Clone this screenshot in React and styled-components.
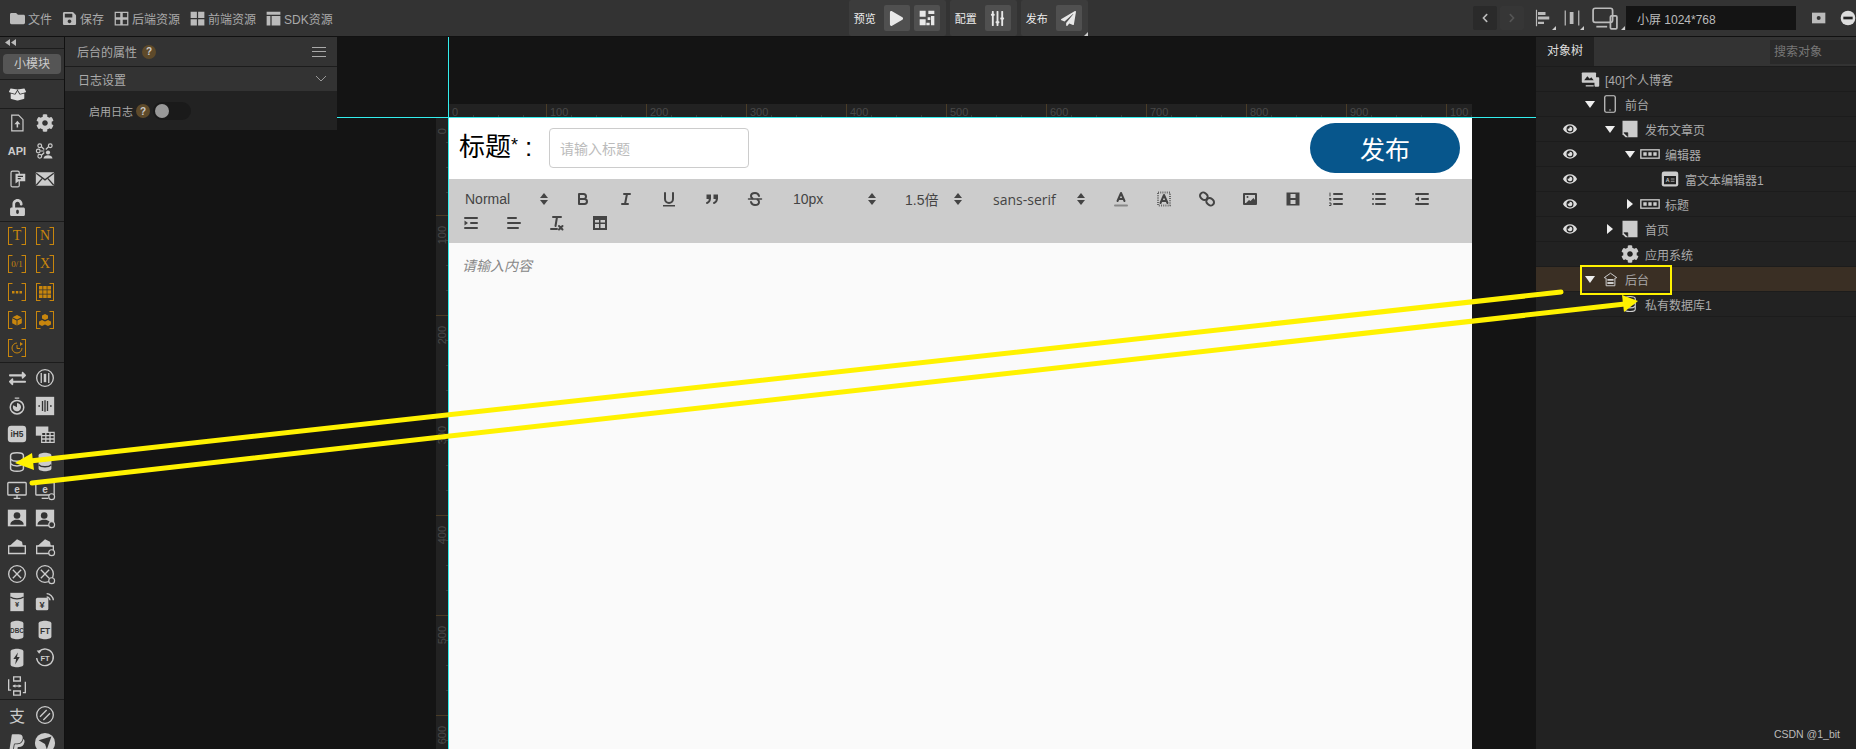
import React from 'react';
import styled, { createGlobalStyle } from 'styled-components';
import { FaBoxOpen, FaCog, FaUnlockAlt, FaPaypal, FaEye, FaPlay, FaPaperPlane, FaExchangeAlt, FaChevronLeft, FaChevronRight, FaFolder, FaSave, FaSlidersH } from 'react-icons/fa';

const GlobalStyle = createGlobalStyle`
  html, body { margin: 0; padding: 0; background: #141414; }
  body { font-family: "Liberation Sans", "Noto Sans CJK SC", sans-serif; font-size: 12px; overflow: hidden; }
  * { box-sizing: border-box; }
`;

const Shell = styled.div`
  position: relative;
  width: 1856px;
  height: 749px;
  overflow: hidden;
  display: flex;
  flex-direction: column;
  background: #141414;
`;

/* ---------- top bar ---------- */
const TopBar = styled.div`
  height: 37px;
  flex: none;
  display: flex;
  background: #333;
  border-bottom: 1px solid #111;
  color: #aaa;
`;
const FileMenu = styled.div`
  width: 850px;
  display: flex;
  align-items: center;
  gap: 10px;
  padding-left: 10px;
`;
const MenuItem = styled.div`
  display: flex;
  align-items: center;
  gap: 3px;
  svg { color: #bbb; width: 15px; height: 15px; }
`;
const ActionGroups = styled.div`
  width: 625px;
  display: flex;
  gap: 4px;
`;
const ActionGroup = styled.div`
  position: relative;
  display: flex;
  align-items: center;
  height: 36px;
  gap: 4px;
  padding: 0 6px 0 5px;
  background: #3c3c3c;
  color: #eee;
  font-size: 11px;
  border-radius: 2px;
  span { margin-right: 4px; }
`;
const SquareBtn = styled.div`
  width: 26px;
  height: 26px;
  display: flex;
  align-items: center;
  justify-content: center;
  background: #505050;
  border-radius: 2px;
  color: #e8e8e8;
`;
const CornerMark = styled.i`
  position: absolute;
  right: ${p => p.$r || 0}px;
  bottom: ${p => p.$b || 0}px;
  width: 0;
  height: 0;
  border-left: 4px solid transparent;
  border-bottom: 4px solid #ccc;
`;
const RightTools = styled.div`
  flex: 1;
  display: flex;
  align-items: center;
`;
const NavBtn = styled.div`
  width: 24px;
  height: 24px;
  margin-right: 3px;
  display: flex;
  align-items: center;
  justify-content: center;
  border-radius: 2px;
  background: ${p => (p.$off ? '#363636' : '#2a2a2a')};
  color: ${p => (p.$off ? '#555' : '#bbb')};
`;
const ToolIcon = styled.div`
  position: relative;
  width: ${p => p.$w}px;
  height: 24px;
  display: flex;
  align-items: center;
  justify-content: center;
  color: #bbb;
`;
const ScreenSelect = styled.div`
  width: 170px;
  height: 24px;
  margin-left: 1px;
  padding-left: 11px;
  display: flex;
  align-items: center;
  background: #141414;
  color: #bbb;
`;

/* ---------- body ---------- */
const Body = styled.div`
  flex: 1;
  display: flex;
  min-height: 0;
`;

const LeftStrip = styled.div`
  width: 65px;
  flex: none;
  background: #333;
  border-right: 1px solid #111;
  overflow: hidden;
`;
const Collapse = styled.div`
  height: 12px;
  padding: 2px 0 0 5px;
  color: #bbb;
  border-bottom: 1px solid #1c1c1c;
`;
const PillRow = styled.div`
  height: 31px;
  padding: 5px 3px 0;
  border-bottom: 1px solid #1c1c1c;
`;
const Pill = styled.div`
  height: 20px;
  line-height: 20px;
  text-align: center;
  background: #555;
  border-radius: 4px;
  color: #ccc;
`;
const BoxRow = styled.div`
  height: 29px;
  padding-left: 9px;
  display: flex;
  align-items: center;
  color: #ddd;
  border-bottom: 1px solid #1c1c1c;
`;
const IconGrid = styled.div`
  display: grid;
  grid-template-columns: 28px 28px;
  grid-auto-rows: 28px;
  padding: ${p => p.$pad || 0}px 0 0 3px;
  height: ${p => p.$h}px;
  border-bottom: ${p => (p.$last ? 'none' : '1px solid #1c1c1c')};
`;
const Cell = styled.div`
  display: flex;
  align-items: center;
  justify-content: center;
  color: #ccc;
`;
const ApiText = styled.span`
  font-weight: 700;
  font-size: 11px;
  color: #ccc;
`;
const PayChar = styled.span`
  font-size: 16px;
`;
const Bracket = styled.div`
  width: 18px;
  height: 18px;
  display: flex;
  align-items: center;
  justify-content: center;
  border: 1.5px solid #c8860d;
  color: #c8860d;
  font-family: "Liberation Serif", serif;
  font-size: ${p => p.$fs || 14}px;
  clip-path: polygon(0 0, 25% 0, 25% 2px, 75% 2px, 75% 0, 100% 0, 100% 100%, 75% 100%, 75% calc(100% - 2px), 25% calc(100% - 2px), 25% 100%, 0 100%);
`;

const Ico = styled.svg.attrs(p => ({ viewBox: '0 0 24 24', width: p.$s || 18, height: p.$s || 18 }))`
  fill: currentColor;
  display: block;
  overflow: visible;
`;
const line = { fill: 'none', stroke: 'currentColor', strokeWidth: 1.6 };
const dark = { fill: 'none', stroke: '#333', strokeWidth: 1.6 };
const Plus = () => <circle cx="20" cy="20" r="3.5" fill="#333" stroke="currentColor" strokeWidth="1.4" />;
const Txt = ({ x = 12, y = 16, s = 8, c = '#333', children }) => (
  <text x={x} y={y} fontSize={s} fontWeight="700" textAnchor="middle" fill={c} fontFamily="Liberation Sans">{children}</text>
);
const Cyl = ({ children, outline }) => (
  <Ico $s={22}>
    <path d="M5 5c0-4 14-4 14 0v14c0 4-14 4-14 0z" {...(outline ? line : {})} />
    {children}
  </Ico>
);

const toolIcons = [
  <Ico><path d="M5 1.5h9l6 6v15H5z" {...line} /><path d="M12.5 9l4 4.5h-3V18h-2v-4.500H8.500z" /></Ico>,
  <FaCog size={18} />,
  <ApiText>API</ApiText>,
  <Ico><g {...line}><circle cx="5" cy="5" r="2.500" /><circle cx="19" cy="5" r="2.500" /><circle cx="5" cy="19" r="2.500" /><circle cx="3" cy="12" r="2.500" /><path d="M7 6l4 4M17 6l-4 4M6 12h5M7 18l4-4" /></g><circle cx="16" cy="14" r="2.800" /><path d="M10 22c0-6 12-6 12 0z" /></Ico>,
  <Ico><rect x="4" y="1.500" width="11" height="21" rx="2" {...line} /><path d="M10 5h13v10H14l-4 3z" /><path d="M13 8.500h7M13 11.500h4" {...dark} /></Ico>,
  <Ico $s={20}><rect x="1" y="4" width="22" height="16" rx="1" /><path d="M1.500 5l10.500 8 10.500-8M1.500 19.500l7-8M22.500 19.500l-7-8" {...dark} /></Ico>,
  <FaUnlockAlt size={17} />,
];

const Orange = styled.svg.attrs({ viewBox: '0 0 12 12', width: 12, height: 12 })`
  fill: #c8860d;
  display: block;
`;

const orange = [
  { key: 'T', glyph: 'T' },
  { key: 'N', glyph: 'N' },
  { key: '01', glyph: '0/1', fs: 9 },
  { key: 'X', glyph: 'X' },
  { key: 'dots', glyph: <Orange><path d="M1 5h2.500v2.500H1zM4.800 5h2.500v2.500H4.800zM8.500 5H11v2.500H8.500z" /></Orange> },
  { key: 'grid', glyph: <Orange><path d="M0 0h3.500v3.500H0zM4.200 0h3.500v3.500H4.200zM8.400 0H12v3.500H8.400zM0 4.200h3.500v3.500H0zM4.200 4.200h3.500v3.500H4.200zM8.400 4.200H12v3.500H8.400zM0 8.400h3.500V12H0zM4.200 8.400h3.500V12H4.200zM8.400 8.400H12V12H8.400z" /></Orange> },
  { key: 'cube', glyph: <Orange><path d="M6 1l4.500 2.300L6 5.500 1.500 3.300zM1.200 4.200l4.400 2.200v5L1.200 9.200zM10.800 4.200L6.400 6.400v5l4.400-2.200z" /></Orange> },
  { key: 'cubes', glyph: <Orange><path d="M6 0l3 1.500v3L6 6 3 4.500v-3zM3 6l3 1.500v3L3 12 0 10.500v-3zM9 6l3 1.500v3L9 12l-3-1.500v-3z" /></Orange> },
  { key: 'clock', glyph: <Orange><path d="M6 1a5 5 0 1 0 5 5" fill="none" stroke="#c8860d" /><path d="M6 3v3.500h3" fill="none" stroke="#c8860d" /><path d="M9 0l3 2-3 2z" /></Orange> },
];

const moduleIcons = [
  <FaExchangeAlt size={17} />,
  <Ico $s={20}><circle cx="12" cy="12" r="10" {...line} /><rect x="10.500" y="7" width="3" height="10" /><path d="M7.500 6v12M16.500 6v12" {...line} /></Ico>,
  <Ico><circle cx="12" cy="13.500" r="9" fill="none" stroke="currentColor" strokeWidth="2" /><path d="M12 13.500V8a5.500 5.500 0 1 1-5 3z" /><path d="M9 1.500h6" {...line} /></Ico>,
  <Ico $s={20}><rect x="1" y="1" width="22" height="22" /><path d="M9 6v12M12 5v14M15 6v12M4 12h2M18 12h2" {...dark} /></Ico>,
  <Ico $s={20}><rect x="1" y="2" width="22" height="20" rx="4" /><Txt y={16} s={10}>iH5</Txt></Ico>,
  <Ico $s={20}><path d="M1 3h15v11H1z" /><path d="M8 10h15v12H8z" fill="#333" stroke="currentColor" strokeWidth="1.400" /><path d="M8 14h15M8 18h15M13 10v12M18 10v12" {...line} /></Ico>,
  <Cyl outline><path d="M5 9c3 3 11 3 14 0M5 14c3 3 11 3 14 0" {...line} /></Cyl>,
  <Cyl><path d="M5 8c3 3 11 3 14 0M5 15c3 3 11 3 14 0" {...dark} /></Cyl>,
  <Ico $s={20}><rect x="1" y="3" width="22" height="15" rx="1" {...line} /><path d="M8 22h8M12 18v4" {...line} /><Txt y={15} s={12} c="currentColor">e</Txt></Ico>,
  <Ico $s={20}><rect x="1" y="3" width="22" height="15" rx="1" {...line} /><path d="M8 22h8" {...line} /><Txt y={15} s={12} c="currentColor">e</Txt><Plus /></Ico>,
  <Ico $s={20}><rect x="1" y="2" width="22" height="20" /><circle cx="12" cy="9" r="4" fill="#333" /><path d="M4 20c0-8 16-8 16 0z" fill="#333" /></Ico>,
  <Ico $s={20}><rect x="1" y="2" width="22" height="20" /><circle cx="11" cy="9" r="4" fill="#333" /><path d="M3 20c0-8 16-8 16 0z" fill="#333" /><Plus /></Ico>,
  <Ico $s={20}><path d="M2 12h20v9H2z" {...line} /><path d="M3 12l9-8 6 3 1 5z" /></Ico>,
  <Ico $s={20}><path d="M2 12h20v9H2z" {...line} /><path d="M3 12l9-8 6 3 1 5z" /><Plus /></Ico>,
  <Ico $s={20}><circle cx="12" cy="12" r="10" {...line} /><path d="M7 7l10 10M17 7L7 17" {...line} /></Ico>,
  <Ico $s={20}><circle cx="12" cy="12" r="10" {...line} /><path d="M7 7l10 10M17 7L7 17" {...line} /><Plus /></Ico>,
  <Ico $s={20}><path d="M4 1h16v22H4z" /><path d="M4 6c4 3 12 3 16 0" {...dark} /><Txt y={18} s={9}>¥</Txt></Ico>,
  <Ico $s={20}><rect x="1" y="7" width="15" height="15" rx="2" /><Txt x={8.500} y={19} s={11}>¥</Txt><path d="M14 2c4 0 8 4 8 8M14 6c2 0 4 2 4 4" {...line} /></Ico>,
  <Cyl><Txt y={15} s={7}>DBC</Txt></Cyl>,
  <Cyl><Txt y={16} s={9}>FT</Txt></Cyl>,
  <Cyl><path d="M13 6l-5 7h3l-1 6 5-8h-3z" fill="#333" /></Cyl>,
  <Ico $s={20}><path d="M5 4a10 10 0 1 1-3 8" {...line} /><path d="M2 3l6 0-3 4z" /><Txt y={16} s={9} c="currentColor">FT</Txt></Ico>,
  <Ico $s={20}><path d="M8 1h8v5H8zM8 18h8v5H8zM2 4v13h3M22 7v13h-3" {...line} /><path d="M7 12l3-2v4zM17 12l-3-2v4z" /><path d="M7 12h10" {...line} /></Ico>,
  null,
];

const payIcons = [
  <PayChar>支</PayChar>,
  <Ico $s={20}><circle cx="12" cy="12" r="10" {...line} /><path d="M6 14L14 6M10 18l8-8" {...line} /></Ico>,
  <FaPaypal size={20} />,
  <Ico $s={22}><circle cx="12" cy="12" r="11" /><path d="M5 9l14-4-5 14-2-6z" fill="#333" /></Ico>,
];

/* ---------- canvas ---------- */
const Canvas = styled.div`
  position: relative;
  flex: 1;
  min-width: 0;
  padding-top: 67px;
  background: #141414;
`;
const CyanV = styled.div`
  position: absolute;
  left: 383px;
  top: 0;
  bottom: 0;
  width: 1px;
  background: #3ee;
  z-index: 3;
`;
const CyanH = styled.div`
  position: absolute;
  left: 272px;
  right: 0;
  top: 80px;
  height: 1px;
  background: #3ee;
  z-index: 3;
`;
const PropsPanel = styled.div`
  position: absolute;
  left: 0;
  top: 0;
  width: 272px;
  height: 93px;
  background: #222;
  color: #aaa;
  z-index: 2;
`;
const PanelHead = styled.div`
  height: 30px;
  padding: 0 11px 0 12px;
  display: flex;
  align-items: center;
  gap: 5px;
  background: #333;
  border-bottom: 1px solid #1c1c1c;
`;
const SectionHead = styled(PanelHead)`
  height: 24px;
  border-bottom: 0;
  padding-left: 13px;
`;
const Spacer = styled.div`
  flex: 1;
`;
const Help = styled.span`
  width: 14px;
  height: 14px;
  border-radius: 50%;
  background: #5e4a2a;
  color: #ccc;
  display: inline-flex;
  align-items: center;
  justify-content: center;
  font-size: 10px;
  font-weight: 700;
`;
const Burger = styled.div`
  width: 14px;
  height: 10px;
  border-top: 1px solid #aaa;
  border-bottom: 1px solid #aaa;
  position: relative;
  &::after {
    content: '';
    position: absolute;
    left: 0;
    right: 0;
    top: 3px;
    height: 1px;
    background: #aaa;
  }
`;
const SwitchRow = styled.div`
  padding: 11px 0 0 24px;
  display: flex;
  align-items: center;
  gap: 3px;
  font-size: 11px;
`;
const Toggle = styled.div`
  width: 38px;
  height: 18px;
  border-radius: 9px;
  background: #1a1a1a;
  padding: 2px;
  &::before {
    content: '';
    display: block;
    width: 14px;
    height: 14px;
    border-radius: 50%;
    background: #999;
  }
`;

const RulerH = styled.div`
  height: 13px;
  width: 1023px;
  margin-left: 384px;
  display: flex;
  overflow: hidden;
  background: #222;
`;
const RulerHCell = styled.div`
  flex: none;
  width: ${p => p.$w || 100}px;
  height: 13px;
  padding: 3px 0 0 3px;
  font-size: 11px;
  line-height: 11px;
  color: #484848;
  border-right: 1px solid #4a3c26;
  background: repeating-linear-gradient(to right, transparent 0 24px, #3c3c3c 24px 25px) left bottom / 100% 2px no-repeat;
`;
const CanvasRow = styled.div`
  margin: 1px 0 0 371px;
  display: flex;
  height: 631px;
`;
const RulerV = styled.div`
  width: 12px;
  height: 631px;
  background: #222;
  overflow: hidden;
  margin-right: 1px;
`;
const RulerVCell = styled.div`
  height: ${p => p.$h || 100}px;
  width: 12px;
  padding-top: 10px;
  border-bottom: 1px solid #4a3c26;
  color: #484848;
  font-size: 11px;
  line-height: 12px;
  writing-mode: vertical-rl;
  background: repeating-linear-gradient(to bottom, transparent 0 24px, #3c3c3c 24px 25px) right top / 2px 100% no-repeat;
  span { display: inline-block; transform: rotate(180deg); }
`;

const Page = styled.div`
  width: 1023px;
  display: flex;
  flex-direction: column;
  background: #fafafa;
`;
const PageHead = styled.div`
  height: 61px;
  flex: none;
  background: #fff;
  display: flex;
  align-items: center;
  padding: 0 12px 2px 10px;
`;
const TitleLabel = styled.div`
  display: flex;
  align-items: baseline;
  font-size: 26px;
  line-height: 36px;
  margin-top: -1px;
  color: #000;
  width: 90px;
  white-space: nowrap;
  sup { font-size: 18px; line-height: 0; position: relative; top: -5px; font-weight: 300; }
  b { font-weight: 400; margin-left: 7px; }
`;
const TitleInput = styled.div`
  width: 200px;
  height: 40px;
  display: flex;
  align-items: center;
  padding-left: 10px;
  border: 1px solid #ccc;
  border-radius: 4px;
  font-size: 14px;
  color: #bbb;
`;
const PublishBtn = styled.div`
  margin-left: auto;
  width: 150px;
  height: 50px;
  display: flex;
  align-items: center;
  justify-content: center;
  border-radius: 25px;
  background: #07568c;
  color: #fff;
  font-size: 25px;
`;
const EditorBar = styled.div`
  flex: none;
  height: 64px;
  padding: 8px 0;
  display: flex;
  flex-wrap: wrap;
  align-content: flex-start;
  background: #ccc;
  color: #444;
`;
const Picker = styled.div`
  position: relative;
  width: ${p => p.$w}px;
  height: 24px;
  padding-left: ${p => p.$pad || 16}px;
  display: flex;
  align-items: center;
  font-size: 14px;
  color: #444;
  font-family: ${p => (p.$open ? '"Open Sans", sans-serif' : 'inherit')};
`;
const UpDown = styled.span`
  position: absolute;
  left: ${p => p.$x}px;
  top: 6px;
  width: 8px;
  height: 12px;
  &::before, &::after {
    content: '';
    position: absolute;
    left: 0;
    border-left: 4px solid transparent;
    border-right: 4px solid transparent;
  }
  &::before { top: 0; border-bottom: 5px solid #444; }
  &::after { bottom: 0; border-top: 5px solid #444; }
`;
const EdBtn = styled.div`
  width: 43px;
  height: 24px;
  display: flex;
  align-items: center;
  justify-content: center;
  color: #444;
`;
const Ql = styled.svg.attrs({ viewBox: '0 0 18 18', width: 18, height: 18 })`
  fill: none;
  stroke: #444;
  stroke-width: 2;
  stroke-linecap: round;
  stroke-linejoin: round;
  .f { fill: #444; stroke: none; }
  .c { fill: #ccc; stroke: none; }
`;
const EditorBody = styled.div`
  flex: 1;
  padding: 13px 13px;
  font-size: 14px;
  line-height: 20px;
  font-style: italic;
  color: #888;
`;

/* ---------- object tree ---------- */
const TreePanel = styled.div`
  width: 320px;
  flex: none;
  background: #222;
  color: #aaa;
`;
const TreeTabs = styled.div`
  height: 30px;
  display: flex;
  align-items: center;
  background: #333;
  border-bottom: 1px solid #1c1c1c;
`;
const ActiveTab = styled.div`
  width: 58px;
  height: 29px;
  line-height: 29px;
  text-align: center;
  background: #222;
  color: #ddd;
`;
const SearchBox = styled.div`
  margin-left: auto;
  width: 86px;
  height: 24px;
  line-height: 24px;
  padding-left: 4px;
  background: #2a2a2a;
  color: #777;
`;
const TreeRow = styled.div`
  position: relative;
  height: 25px;
  display: flex;
  align-items: center;
  padding-left: 44px;
  border-bottom: 1px solid #1c1c1c;
  background: ${p => (p.$hl ? '#3a2f24' : 'transparent')};
`;
const EyeMark = styled.div`
  position: absolute;
  left: 27px;
  top: 5px;
  color: #ddd;
`;
const Arrow = styled.div`
  width: 20px;
  flex: none;
  margin-left: ${p => p.$level * 20}px;
  display: flex;
  justify-content: center;
  &::before {
    content: '';
    display: ${p => (p.$dir ? 'block' : 'none')};
    ${p => (p.$dir === 'down'
      ? 'border-left:5px solid transparent;border-right:5px solid transparent;border-top:7px solid #eee;'
      : 'border-top:5px solid transparent;border-bottom:5px solid transparent;border-left:6px solid #eee;')}
  }
`;
const NodeIcon = styled.div`
  width: 20px;
  flex: none;
  display: flex;
  justify-content: center;
  color: #ccc;
`;
const NodeLabel = styled.div`
  margin-left: 5px;
`;

const Annotation = styled.svg`
  position: absolute;
  left: 0;
  top: 0;
  z-index: 5;
  pointer-events: none;
`;
const Watermark = styled.div`
  position: absolute;
  right: 16px;
  bottom: 9px;
  font-size: 10.5px;
  color: #bbb;
  z-index: 4;
`;

const PageGlyph = () => <Ico $s={18}><path d="M2 1h20v22H6l-4-4z" /><path d="M4 17l5 0 0 5z" fill="#222" stroke="#222" /></Ico>;
const Widget = () => <Ico $s={20}><rect x="1" y="7" width="22" height="10" {...line} /><path d="M4 10h4v4H4zM10 10h4v4h-4zM16 10h4v4h-4z" /></Ico>;

const treeRows = [
  { level: -1, icon: <Ico $s={19}><rect x="1" y="3" width="18" height="13" rx="1" /><path d="M4 13l4-5 3 3 2-2 3 4z" fill="#222" /><rect x="17" y="9" width="6" height="12" rx="1" /><path d="M6 20h10" {...line} /></Ico>, label: '[40]个人博客' },
  { level: 0, dir: 'down', icon: <Ico $s={18}><rect x="5" y="1" width="14" height="22" rx="2" {...line} /><path d="M11 20h2" {...line} /></Ico>, label: '前台' },
  { level: 1, dir: 'down', eye: true, icon: <PageGlyph />, label: '发布文章页' },
  { level: 2, dir: 'down', eye: true, icon: <Widget />, label: '编辑器' },
  { level: 3, eye: true, icon: <Ico $s={18}><rect x="1" y="2" width="22" height="20" rx="3" /><rect x="4" y="8" width="16" height="11" fill="#222" /><Txt x={9} y={16} s={7} c="#ccc">A</Txt><path d="M13 12h5M13 15h5" stroke="#ccc" /></Ico>, label: '富文本编辑器1' },
  { level: 2, dir: 'right', eye: true, icon: <Widget />, label: '标题' },
  { level: 1, dir: 'right', eye: true, icon: <PageGlyph />, label: '首页' },
  { level: 1, icon: <FaCog size={18} />, label: '应用系统' },
  { level: 0, dir: 'down', hl: true, icon: <Ico $s={15}><path d="M2 9l10-7 10 7-3 1v12H5V10z" {...line} /><path d="M7 11h10v3H7zM7 16h10v3H7z" /></Ico>, label: '后台' },
  { level: 1, icon: <Ico $s={18}><path d="M5 5c0-4 14-4 14 0v14c0 4-14 4-14 0z" {...line} /><path d="M5 10c3 3 11 3 14 0M5 15c3 3 11 3 14 0" {...line} /></Ico>, label: '私有数据库1' },
];

const Select = ({ w, pad, x, open, children }) => (
  <Picker $w={w} $pad={pad} $open={open}>
    {children}
    <UpDown $x={x} />
  </Picker>
);

const edIcons = {
  bold: <Ql><path d="M5 4h4.500a2.500 2.500 0 0 1 0 5H5zM5 9h5.500a2.500 2.500 0 0 1 0 5H5z" /></Ql>,
  italic: <Ql><path d="M7 4h6M5 14h6M8 14l2-10" /></Ql>,
  underline: <Ql><path d="M5 3v6a4 4 0 0 0 8 0V3" /><rect className="f" x="3" y="15" width="12" height="1.500" /></Ql>,
  quote: <Ql><rect className="f" x="3.500" y="4.500" width="4.500" height="4.500" /><rect className="f" x="10.500" y="4.500" width="4.500" height="4.500" /><path d="M7 8c0 4-3 5-3 5M14 8c0 4-3 5-3 5" /></Ql>,
  strike: <Ql><path d="M15.500 9h-13" strokeWidth="1.500" /><path d="M13 6c-.5-1.800-2.200-3-4-3-2.500 0-4 1.500-4 3 0 1 .5 1.800 1.500 2.300M5 12c.5 1.800 2.200 3 4 3 2.500 0 4-1.300 4-3 0-1-.5-1.800-1.500-2.300" /></Ql>,
  color: <Ql><path d="M5.500 11L9 3l3.500 8M6.400 9h5.200" /><path d="M3 15.500h12" stroke="#888" /></Ql>,
  background: <Ql><rect x="3" y="2.500" width="12" height="13" stroke="#666" strokeDasharray="1 1.200" strokeWidth="2" strokeLinecap="butt" /><path d="M5.500 13L9 5l3.500 8M6.400 11h5.200" /></Ql>,
  link: <Ql><rect x="2" y="3" width="8" height="6.500" rx="3.200" transform="rotate(40 6 6)" /><rect x="8" y="8.500" width="8" height="6.500" rx="3.200" transform="rotate(40 12 12)" /></Ql>,
  image: <Ql><rect x="3" y="4" width="12" height="10" /><circle className="f" cx="6.500" cy="7" r="1" /><path className="f" d="M5 13l3-3 1.500 1 3-3 1.500 2v3z" /></Ql>,
  video: <Ql><rect className="f" x="2.500" y="2.500" width="13" height="13" /><path className="c" d="M6.500 4h5v4h-5zM6.500 10h5v4h-5z" /></Ql>,
  ordered: <Ql><path d="M7 4h8M7 9h8M7 14h8" /><path d="M3 3v3M2.500 8.500h1.500l-1.500 1.500h1.500M2.500 13h1.500v2.500h-1.500" strokeWidth="1" /></Ql>,
  bullet: <Ql><path d="M6 4h9M6 9h9M6 14h9M3 4h.01M3 9h.01M3 14h.01" /></Ql>,
  outdent: <Ql><path d="M3 14h12M3 4h12M9 9h6" /><path className="f" d="M6 6.500v5L2.500 9z" /></Ql>,
  indent: <Ql><path d="M3 14h12M3 4h12M9 9h6" /><path className="f" d="M2.500 6.500v5L6 9z" /></Ql>,
  align: <Ql><path d="M3 4h8M3 9h12M3 14h10" /></Ql>,
  clean: <Ql><path d="M5 3h8M9 3L7.500 12M3 15h6" /><path d="M11 12l3.500 3.500M14.500 12L11 15.500" /></Ql>,
  table: <Ql><rect className="f" x="2" y="2" width="14" height="14" /><path className="c" d="M4 6h4v2.500H4zM9.500 6H14v2.500H9.500zM4 10h4v4H4zM9.500 10H14v4H9.500z" /></Ql>,
};

const firstGroup = ['bold', 'italic', 'underline', 'quote', 'strike'];
const secondGroup = ['color', 'background', 'link', 'image', 'video', 'ordered', 'bullet', 'outdent'];
const thirdGroup = ['indent', 'align', 'clean', 'table'];

export default function App() {
  return (
    <Shell>
      <GlobalStyle />
      <TopBar>
        <FileMenu>
          <MenuItem><FaFolder />文件</MenuItem>
          <MenuItem><FaSave />保存</MenuItem>
          <MenuItem>
            <Ico $s={15}><path d="M2 2h9v9H2zM13 2h9v9h-9zM2 13h9v9H2zM13 13h9v9h-9z" fill="none" stroke="#bbb" strokeWidth="2" /></Ico>后端资源
          </MenuItem>
          <MenuItem>
            <Ico $s={15}><path d="M1 1h10v10H1zM13 1h10v10H13zM1 13h10v10H1zM13 13h10v10H13z" fill="#bbb" /></Ico>前端资源
          </MenuItem>
          <MenuItem>
            <Ico $s={15}><path d="M1 1h22v5H1zM1 8h6v15H1zM9 8h14v15H9z" fill="#bbb" /></Ico>SDK资源
          </MenuItem>
        </FileMenu>
        <ActionGroups>
          <ActionGroup>
            <span>预览</span>
            <SquareBtn><FaPlay size={15} /></SquareBtn>
            <SquareBtn>
              <Ico $s={16}><path d="M1 1h9v9H1zM14 1h9v5h-9zM1 14h9v9H1zM13 11h4v4h-4zM18 9h5v14h-5zM11 19h5v4h-5z" /></Ico>
            </SquareBtn>
          </ActionGroup>
          <ActionGroup>
            <span>配置</span>
            <SquareBtn><FaSlidersH size={15} style={{ transform: 'rotate(90deg)' }} /></SquareBtn>
          </ActionGroup>
          <ActionGroup>
            <span>发布</span>
            <SquareBtn><FaPaperPlane size={15} /></SquareBtn>
            <CornerMark />
          </ActionGroup>
        </ActionGroups>
        <RightTools>
          <NavBtn><FaChevronLeft size={10} /></NavBtn>
          <NavBtn $off><FaChevronRight size={10} /></NavBtn>
          <ToolIcon $w={33}>
            <Ico $s={18}><path d="M2 1v22" {...line} /><path d="M4 4h10v4H4zM4 10h15v4H4zM4 17h8v3H4z" /></Ico>
            <CornerMark $r={4} />
          </ToolIcon>
          <ToolIcon $w={24}>
            <Ico $s={18}><path d="M3 2v20M21 2v20" {...line} /><path d="M9 4h5v16H9z" /></Ico>
            <CornerMark $r={0} />
          </ToolIcon>
          <ToolIcon $w={41}>
            <Ico $s={26}><rect x="1" y="3" width="18" height="13" rx="2" {...line} /><path d="M4 20h10" {...line} /><rect x="17" y="10" width="6" height="12" rx="1" {...line} /></Ico>
            <CornerMark $r={0} />
          </ToolIcon>
          <ScreenSelect>小屏 1024*768</ScreenSelect>
          <ToolIcon $w={44}>
            <Ico $s={16}><path d="M3 4h20v16H3z" /><circle cx="13" cy="12" r="3" fill="#333" /></Ico>
          </ToolIcon>
          <Ico $s={16}><circle cx="12" cy="12" r="11" fill="#ddd" /><rect x="5" y="10" width="14" height="4" fill="#222" /></Ico>
        </RightTools>
      </TopBar>

      <Body>
        <LeftStrip>
          <Collapse>
            <svg width="11" height="7" viewBox="0 0 11 7" fill="#bbb" style={{ display: 'block' }}><path d="M5 0v7L0 3.500zM11 0v7L6 3.500z" /></svg>
          </Collapse>
          <PillRow><Pill>小模块</Pill></PillRow>
          <BoxRow><FaBoxOpen size={17} /></BoxRow>
          <IconGrid $h={113}>
            {toolIcons.map((icon, i) => <Cell key={i}>{icon}</Cell>)}
          </IconGrid>
          <IconGrid $h={141}>
            {orange.map(o => <Cell key={o.key}><Bracket $fs={o.fs}>{o.glyph}</Bracket></Cell>)}
          </IconGrid>
          <IconGrid $h={337} $pad={1}>
            {moduleIcons.map((icon, i) => <Cell key={i}>{icon}</Cell>)}
          </IconGrid>
          <IconGrid $h={60} $last $pad={1}>
            {payIcons.map((icon, i) => <Cell key={i}>{icon}</Cell>)}
          </IconGrid>
        </LeftStrip>

        <Canvas>
          <CyanV />
          <CyanH />
          <PropsPanel>
            <PanelHead>
              后台的属性<Help>?</Help>
              <Spacer />
              <Burger />
            </PanelHead>
            <SectionHead>
              日志设置
              <Spacer />
              <svg width="10" height="6" viewBox="0 0 10 6" fill="none" stroke="#999"><path d="M0 0l5 5 5-5" /></svg>
            </SectionHead>
            <SwitchRow>启用日志<Help>?</Help><Toggle /></SwitchRow>
          </PropsPanel>
          <RulerH>
            {[0, 100, 200, 300, 400, 500, 600, 700, 800, 900, 100].map((n, i) => (
              <RulerHCell key={i} $w={i === 0 ? 98 : 100}>{n}</RulerHCell>
            ))}
          </RulerH>
          <CanvasRow>
            <RulerV>
              {[0, 100, 200, 300, 400, 500, 600].map((n, i) => (
                <RulerVCell key={n} $h={i === 0 ? 98 : 100}><span>{n}</span></RulerVCell>
              ))}
            </RulerV>
            <Page>
              <PageHead>
                <TitleLabel>标题<sup>*</sup><b>:</b></TitleLabel>
                <TitleInput>请输入标题</TitleInput>
                <PublishBtn>发布</PublishBtn>
              </PageHead>
              <EditorBar>
                <Select w={112} x={91}>Normal</Select>
                {firstGroup.map(k => <EdBtn key={k}>{edIcons[k]}</EdBtn>)}
                <Select w={113} pad={17} x={92}>10px</Select>
                <Select w={85} pad={16} x={65}>1.5倍</Select>
                <Select w={125} pad={19} x={103} open>sans-serif</Select>
                {secondGroup.map(k => <EdBtn key={k}>{edIcons[k]}</EdBtn>)}
                {thirdGroup.map(k => <EdBtn key={k}>{edIcons[k]}</EdBtn>)}
              </EditorBar>
              <EditorBody>请输入内容</EditorBody>
            </Page>
          </CanvasRow>
        </Canvas>

        <TreePanel>
          <TreeTabs>
            <ActiveTab>对象树</ActiveTab>
            <SearchBox>搜索对象</SearchBox>
          </TreeTabs>
          {treeRows.map(row => (
            <TreeRow key={row.label} $hl={row.hl}>
              {row.eye && <EyeMark><FaEye size={14} /></EyeMark>}
              <Arrow $level={row.level} $dir={row.dir} />
              <NodeIcon>{row.icon}</NodeIcon>
              <NodeLabel>{row.label}</NodeLabel>
            </TreeRow>
          ))}
        </TreePanel>
      </Body>

      <Annotation width="1856" height="749" viewBox="0 0 1856 749">
        <rect x="1581" y="266" width="90" height="28" fill="none" stroke="#fff200" strokeWidth="2" />
        <g fill="none" stroke="#fff200" strokeWidth="5" strokeLinecap="round">
          <path d="M1561 292L30 461" />
          <path d="M32 483L1625 304" />
        </g>
        <path d="M15 463L32 453L34 470Z" fill="#fff200" />
        <path d="M1638 301L1622 295L1624 312Z" fill="#fff200" />
      </Annotation>
      <Watermark>CSDN @1_bit</Watermark>
    </Shell>
  );
}
